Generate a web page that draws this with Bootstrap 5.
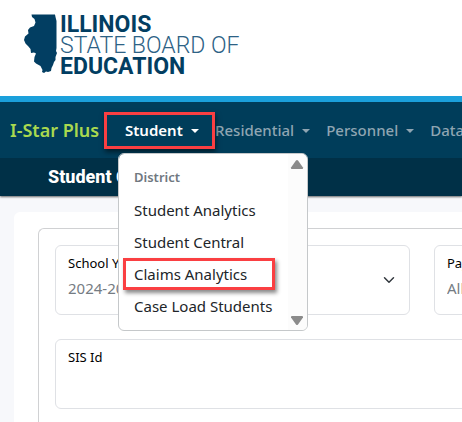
<!DOCTYPE html>
<html lang="en">
<head>
<meta charset="utf-8">
<meta name="viewport" content="width=device-width, initial-scale=1">
<title>I-Star Plus</title>
<link href="https://cdn.jsdelivr.net/npm/bootstrap@5.3.0/dist/css/bootstrap.min.css" rel="stylesheet">
<style>
body { font-family: "Noto Sans", "Open Sans", sans-serif; font-size: 15px; background: #f7f8fb; overflow: hidden; }
.agency { height: 102px; padding: 14px 24px 0; border-bottom: 6px solid #1ba0db; background: #fff; color: #023e62; }
.agency-state { width: 34px; height: 60px; flex: none; }
.agency-name { font: 700 23px/21px Roboto, sans-serif; margin-left: 2px; }
.agency-name span { display: block; white-space: nowrap; }
.agency-name .thin { font-weight: 300; color: #2d6285; }
.topnav { height: 56px; background: #003d5a; padding: 0; flex-wrap: nowrap; justify-content: flex-start; z-index: 5; }
.topnav .navbar-brand { color: #a9d94f; font-size: 18px; font-weight: 600; padding: 0; margin: 0 0 0 10px; flex: 0 0 94px; white-space: nowrap; }
.topnav .nav-link { color: #8fa5b2; font-weight: 500; font-size: 15px; line-height: 24px; padding: 6px 0; margin-right: 16px; white-space: nowrap; background: none; border: 0; }
.topnav .nav-link::after { margin-left: 8px; vertical-align: 3px; border-width: 4px 4px 0; }
.topnav .nav-link.show { color: #fff; font-weight: 600; border: 3px solid #fa3f42; padding: 3px 14px 3px 18px; width: 111px; margin: 0; height: 37px; box-shadow: 1px 3px 5px #0008; text-align: left; }
.student-menu.dropdown-menu { top: 41px; left: 14px; width: 190px; height: 178px; padding: 8px 0; border: 1px solid #c5c8ca; border-radius: 6px; margin: 0; font-size: 15px; overflow: hidden; }
.student-menu .dropdown-header { font-size: 13px; line-height: 20px; padding: 5px 15px 7px; height: 32px; color: #70787f; font-weight: 600; margin: 0; }
.student-menu .dropdown-item { line-height: 24px; padding: 4px 15px; color: #212529; }
.student-menu .marked { border: 3px solid #fa3f42; padding: 1px 8px; margin-left: 4px; width: 152px; box-shadow: 2px 3px 4px #0007; height: 32px; line-height: 24px; position: relative; z-index: 1; }
.scroll-strip { position: absolute; top: 0; right: 0; bottom: 0; width: 19px; background: #fcfcfc; padding: 5px 0 4px 2px; }
.pagebar { height: 38px; background: #003047; color: #fff; padding-left: 48px; box-shadow: 0 1px 2px #0009; position: relative; }
.pagebar h1 { font: 800 18px/38px Roboto, sans-serif; margin: 0; }
.panel { margin: 16px 0 0 14px; padding: 16px 0 0 24px; background: #fff; border-radius: 6px 0 0 0; min-height: calc(100vh - 212px); }
.filters { border: 1px solid #d0d1d3; border-width: 1px 0 0 1px; border-radius: 6px 0 0 0; padding: 16px 0 16px 16px; min-height: calc(100vh - 228px); }
.filters .top-row { gap: 24px; margin-bottom: 24px; }
.field { flex: 0 0 355px; }
.field.wide { margin-right: -8px; }
.form-floating.field > .form-select, .form-floating.field > .form-control { height: 70px; border: 1px solid #dfe1e5; border-radius: 6px; padding: 24px 36px 8px 12px; font-size: 15px; line-height: 24px; color: #757c83; background-color: #fff; }
.form-floating.field > .form-select { background-position: right 13px center; background-size: 14px 12px; }
.form-floating.field > label { font-size: 13px; line-height: 20px; color: #000 !important; opacity: 1 !important; transform: none !important; padding: 7px 12px; height: auto; }
</style>
</head>
<body>
<header>
  <div class="agency d-flex align-items-start">
    <svg class="agency-state" viewBox="24 14 34 60" fill="#023e62" aria-hidden="true"><path d="M31.500 14.500H55L55.500 17L56.500 21V48L56 51L57 53L55.500 57L55.500 60L54 62L53 65L51.500 68L51 71L48 72L46 71.500L44 73L42 72L42.500 70L40.500 66L36 63.500L34 61.500L34.500 57L36 53.500L34 52.500L31 53L30.500 49L28 46L25.500 43.500L24 40L25 36.500L28.500 33.500L28 30L30 27.500L34 26L35.500 22.500L34.500 19L32 17Z"/></svg>
    <div class="agency-name"><span>ILLINOIS</span><span class="thin">STATE BOARD OF</span><span>EDUCATION</span></div>
  </div>
  <nav class="topnav navbar" aria-label="Main">
    <a class="navbar-brand" href="#">I-Star Plus</a>
    <ul class="nav flex-nowrap align-items-center">
      <li class="nav-item dropdown">
        <button type="button" class="nav-link dropdown-toggle show" data-bs-toggle="dropdown" aria-expanded="true">Student</button>
        <div class="student-menu dropdown-menu show">
          <h2 class="dropdown-header">District</h2>
          <a class="dropdown-item" href="#">Student Analytics</a>
          <a class="dropdown-item" href="#">Student Central</a>
          <a class="dropdown-item marked" href="#">Claims Analytics</a>
          <a class="dropdown-item" href="#">Case Load Students</a>
          <div class="scroll-strip d-flex flex-column justify-content-between" aria-hidden="true">
            <svg width="14" height="11" fill="#8b8b8b"><path d="M6 1.500Q7 .5 8 1.500L13 8.500Q13.500 10 12 10H2Q.5 10 1 8.500z"/></svg>
            <svg width="14" height="11" fill="#8b8b8b"><path d="M6 9.500Q7 10.500 8 9.500L13 2.500Q13.500 1 12 1H2Q.5 1 1 2.500z"/></svg>
          </div>
        </div>
      </li>
      <li class="nav-item"><button type="button" class="nav-link dropdown-toggle">Residential</button></li>
      <li class="nav-item"><button type="button" class="nav-link dropdown-toggle">Personnel</button></li>
      <li class="nav-item"><button type="button" class="nav-link dropdown-toggle">Data</button></li>
    </ul>
  </nav>
  <div class="pagebar"><h1>Student Central</h1></div>
</header>
<main class="panel">
  <form class="filters">
    <div class="top-row d-flex">
      <div class="form-floating field">
        <select class="form-select" id="year"><option>2024-2025</option></select>
        <label for="year">School Year</label>
      </div>
      <div class="form-floating field">
        <select class="form-select" id="pay"><option>All</option></select>
        <label for="pay">Pay Code</label>
      </div>
    </div>
    <div class="form-floating field wide">
      <input class="form-control" id="sis" type="text">
      <label for="sis">SIS Id</label>
    </div>
  </form>
</main>
<script src="https://cdn.jsdelivr.net/npm/bootstrap@5.3.0/dist/js/bootstrap.bundle.min.js"></script>
</body>
</html>
